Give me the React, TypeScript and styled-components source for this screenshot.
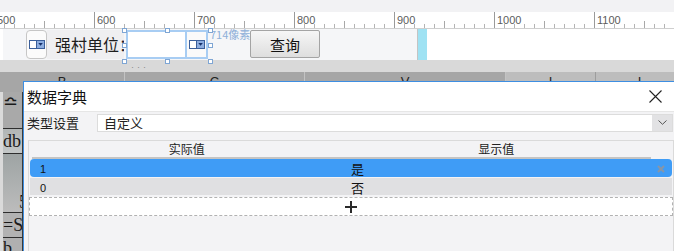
import React from 'react';
import styled, { createGlobalStyle } from 'styled-components';

const GlobalStyle = createGlobalStyle`
  html, body {
    margin: 0;
    padding: 0;
    background: #fff;
    overflow: hidden;
  }
  body {
    font-family: "Noto Sans CJK SC", "Noto Sans", sans-serif;
  }
`;

// 눈금자 라벨
const rulerMarks = [500, 600, 700, 800, 900, 1000, 1100, 1200];

const sheetColumns = [
  { label: 'B', light: false },
  { label: 'C', light: false },
  { label: 'V', light: false },
  { label: 'I', light: true },
  { label: 'I', light: true },
  { label: '', light: true },
];

const sheetRows = [
  { h: 36, text: '≏', tone: '#a9a9a9', align: 'flex-start', pad: 0 },
  { h: 24, text: 'db', tone: 'linear-gradient(#b1b5b5, #c3c7c7)', align: 'center', pad: 0 },
  { h: 58, text: '5', tone: 'linear-gradient(#9ea4a4, #bcbcbc)', align: 'flex-end', pad: 16 },
  { h: 24, text: '=S', tone: '#b2b2b2', align: 'center', pad: 0 },
  { h: 24, text: 'b', tone: '#b0b0b0', align: 'flex-start', pad: 0 },
];

const dictRows = [
  { value: '1', label: '是', selected: true },
  { value: '0', label: '否', selected: false },
];

const SelectIcon = () => (
  <svg width="16" height="9" viewBox="0 0 16 9">
    <rect x="0.5" y="0.5" width="7" height="8" fill="#fff" stroke="#3b5f9a" />
    <rect x="7.5" y="0.5" width="8" height="8" fill="#8eaee0" stroke="#3b5f9a" />
    <path d="M9.3 3 L13.8 3 L11.55 5.8 Z" fill="#15306a" />
  </svg>
);

const App: React.FC = () => {
  return (
    <Page>
      <GlobalStyle />
      <TopStrip />

      <Ruler>
        {rulerMarks.map(m => (
          <RulerSeg key={m}>{m}</RulerSeg>
        ))}
      </Ruler>

      <Toolbar>
        <Panel>
          <ToggleBox>
            <SelectIcon />
          </ToggleBox>
          <LabelBox>强村单位：</LabelBox>
          <FieldWrap>
            <FieldInput />
            <DropBtn>
              <SelectIcon />
            </DropBtn>
            {[
              [-2, -2], [41, -2], [84, -2],
              [-2, 13], [84, 13],
              [-2, 29], [41, 29], [84, 29],
            ].map(([l, t], i) => (
              <Handle key={i} style={{ left: l, top: t }} />
            ))}
          </FieldWrap>
          <SizeHint>714像素</SizeHint>
          <QueryButton type="button">查询</QueryButton>
        </Panel>
        <CyanBar />
      </Toolbar>

      <Splitter>
        <Dots>•••</Dots>
      </Splitter>

      <Sheet>
        <SheetHead>
          {sheetColumns.map((c, i) => (
            <HeadCell key={i} $light={c.light}>{c.label}</HeadCell>
          ))}
        </SheetHead>
        <SheetBody>
          {sheetRows.map((r, i) => (
            <SheetCell key={i} $h={r.h} $tone={r.tone} $align={r.align}>
              <CellText $pad={r.pad}>{r.text}</CellText>
            </SheetCell>
          ))}
        </SheetBody>
      </Sheet>

      {/* 数据字典 弹窗 */}
      <Dialog>
        <DialogHeader>
          <DialogTitle>数据字典</DialogTitle>
          <CloseButton type="button" aria-label="close">
            <svg width="13" height="13" viewBox="0 0 13 13">
              <path d="M0.5 0.5 L12.5 12.5 M12.5 0.5 L0.5 12.5" stroke="#222" strokeWidth="1.1" />
            </svg>
          </CloseButton>
        </DialogHeader>

        <TypeRow>
          <TypeLabel>类型设置</TypeLabel>
          <TypeSelect>
            <TypeValue>自定义</TypeValue>
            <Chevron>
              <svg width="9" height="5" viewBox="0 0 9 5">
                <path d="M0.5 0.5 L4.5 4.3 L8.5 0.5" fill="none" stroke="#555" strokeWidth="1" />
              </svg>
            </Chevron>
          </TypeSelect>
        </TypeRow>

        <DictTable>
          <DictHead>
            <HeadLabel>实际值</HeadLabel>
            <HeadLabel>显示值</HeadLabel>
          </DictHead>
          {dictRows.map(r => (
            <DictRow key={r.value} $selected={r.selected}>
              <ValueCell>{r.value}</ValueCell>
              <LabelCell>{r.label}</LabelCell>
              <ActionCell>
                {r.selected && (
                  <svg width="8" height="8" viewBox="0 0 8 8">
                    <path d="M1 1 L7 7 M7 1 L1 7" stroke="#8796a8" strokeWidth="2" />
                  </svg>
                )}
              </ActionCell>
            </DictRow>
          ))}
          <AddRow>
            <span />
            <PlusCell>
              <svg width="12" height="12" viewBox="0 0 12 12">
                <path d="M6 0 V12 M0 6 H12" stroke="#2a2a2a" strokeWidth="2" />
              </svg>
            </PlusCell>
          </AddRow>
        </DictTable>
      </Dialog>
    </Page>
  );
};

export default App;

// --------------------------------------
// styled-components
// --------------------------------------

const Page = styled.div`
  position: relative;
  width: 674px;
  height: 251px;
  overflow: hidden;
  background: #fff;
`;

const TopStrip = styled.div`
  height: 12px;
  background: #f2f2f4;
`;

const Ruler = styled.div`
  display: flex;
  height: 16px;
  margin-left: -6px;
  background: #fff;
  border-bottom: 1px solid #cfcfcf;
`;

const RulerSeg = styled.div`
  flex: 0 0 100px;
  box-sizing: border-box;
  border-left: 1px solid #9a9a9a;
  padding: 3px 0 0 2px;
  background-image:
    linear-gradient(#a8a8a8, #a8a8a8),
    repeating-linear-gradient(to right, transparent 0 9px, #b4b4b4 9px 10px);
  background-size: 1px 7px, 100% 4px;
  background-position: 49px 100%, 0 100%;
  background-repeat: no-repeat;
  font: 11px/11px "Liberation Sans", Arial, sans-serif;
  color: #5c5c5c;
`;

const Toolbar = styled.div`
  display: flex;
  height: 31px;
  background: #fff;
`;

const Panel = styled.div`
  position: relative;
  z-index: 1;
  box-sizing: border-box;
  display: flex;
  align-items: flex-start;
  width: 415px;
  margin-left: 3px;
  padding: 1px 0 0 23px;
  background: #f5f6f8;
  border-right: 1px solid #c4c4c4;
`;

const CyanBar = styled.div`
  width: 9px;
  background: #9fe2f3;
`;

const ToggleBox = styled.div`
  box-sizing: border-box;
  width: 21px;
  height: 29px;
  display: flex;
  align-items: center;
  justify-content: center;
  border: 1px solid #c6c6c6;
  border-radius: 4px;
  background: #fbfbfb;
`;

const LabelBox = styled.div`
  width: 77px;
  height: 29px;
  box-sizing: border-box;
  padding-left: 8px;
  background: #efeff1;
  font-size: 16px;
  line-height: 29px;
  color: #1e1e1e;
  white-space: nowrap;
  overflow: hidden;
`;

const FieldWrap = styled.div`
  position: relative;
  display: flex;
  width: 86px;
  height: 31px;
  box-sizing: border-box;
  padding: 0 2px;
`;

const FieldInput = styled.div`
  box-sizing: border-box;
  width: 61px;
  height: 29px;
  background: #fff;
  border: 2px solid #a8cdf3;
`;

const DropBtn = styled.div`
  box-sizing: border-box;
  width: 21px;
  height: 29px;
  display: flex;
  align-items: center;
  justify-content: center;
  background: #fafafa;
  border: 2px solid #a8cdf3;
  border-left: 0;
`;

const Handle = styled.span`
  position: absolute;
  box-sizing: border-box;
  width: 5px;
  height: 5px;
  background: #fff;
  border: 1px solid #7fa6d4;
`;

const SizeHint = styled.div`
  width: 40px;
  margin-top: -2px;
  font-size: 11px;
  line-height: 13px;
  color: #8eb0d8;
  white-space: nowrap;
`;

const QueryButton = styled.button`
  box-sizing: border-box;
  width: 70px;
  height: 28px;
  padding: 0;
  border: 1px solid #a4a4a4;
  border-radius: 2px;
  background: linear-gradient(#f6f6f6, #dedede);
  font-family: "Noto Sans CJK SC", sans-serif;
  font-size: 15px;
  color: #111;
`;

const Splitter = styled.div`
  height: 12px;
  background: #d9d9d9;
  display: flex;
  align-items: center;
`;

const Dots = styled.span`
  margin-left: 130px;
  font-size: 5px;
  letter-spacing: 1px;
  color: #888;
`;

const Sheet = styled.div`
  height: 179px;
  background: #b8b8b8;
`;

const SheetHead = styled.div`
  display: grid;
  grid-template-columns: 125px 180px 201px 90px 88px 1fr;
  height: 20px;
`;

const HeadCell = styled.div<{ $light: boolean }>`
  background: ${({ $light }) => ($light ? '#bdbdbd' : '#a6a6a6')};
  border-right: 1px solid ${({ $light }) => ($light ? '#9d9d9d' : '#c3c3c3')};
  font: 13px/20px "Liberation Sans", Arial, sans-serif;
  color: #222;
  text-align: center;
`;

const SheetBody = styled.div`
  display: flex;
  flex-direction: column;
  padding-left: 3px;
  background: #dadada;
`;

const SheetCell = styled.div<{ $h: number; $tone: string; $align: string }>`
  width: 19px;
  height: ${({ $h }) => $h}px;
  display: flex;
  align-items: ${({ $align }) => $align};
  background: ${({ $tone }) => $tone};
  border-bottom: 1px solid #2e2e2e;
  border-right: 1px solid #3a3a3a;
  overflow: hidden;
  font: 18px/20px "Liberation Serif", "Times New Roman", serif;
  color: #1a1a1a;
  white-space: nowrap;
`;

const CellText = styled.span<{ $pad: number }>`
  margin-left: ${({ $pad }) => $pad}px;
`;

const Dialog = styled.div`
  position: absolute;
  left: 23px;
  top: 81px;
  width: 651px;
  height: 180px;
  box-sizing: border-box;
  border-top: 1px solid #3d8ee2;
  border-left: 1px solid #3d8ee2;
  background: #f3f3f5;
  z-index: 2;
`;

const DialogHeader = styled.div`
  height: 29px;
  display: flex;
  align-items: center;
  justify-content: space-between;
  padding: 0 12px 0 3px;
  background: #fff;
  border-bottom: 1px solid #e6e6e6;
`;

const DialogTitle = styled.div`
  font-size: 15px;
  color: #111;
`;

const CloseButton = styled.button`
  display: flex;
  padding: 0;
  border: 0;
  background: transparent;
`;

const TypeRow = styled.div`
  height: 21px;
  display: flex;
  align-items: center;
  padding: 0 1px 0 3px;
`;

const TypeLabel = styled.div`
  width: 70px;
  font-size: 13px;
  color: #222;
`;

const TypeSelect = styled.div`
  flex: 1;
  height: 18px;
  box-sizing: border-box;
  display: flex;
  align-items: center;
  background: #fff;
  border: 1px solid #dcdcdc;
`;

const TypeValue = styled.div`
  flex: 1;
  padding-left: 6px;
  font-size: 13px;
  color: #222;
`;

const Chevron = styled.div`
  width: 20px;
  height: 100%;
  display: flex;
  align-items: center;
  justify-content: center;
  background: #e2e2e4;
`;

const DictTable = styled.div`
  margin: 7px 0 0 4px;
  height: 120px;
  border: 1px solid #dadada;
  border-bottom: 0;
`;

const DictHead = styled.div`
  display: grid;
  grid-template-columns: 1fr 1fr;
  height: 16px;
  margin: 0 22px 0 3px;
  border-bottom: 2px solid #c4c4c4;
`;

const HeadLabel = styled.div`
  text-align: center;
  font-size: 12px;
  line-height: 16px;
  color: #222;
`;

const DictRow = styled.div<{ $selected: boolean }>`
  display: grid;
  grid-template-columns: 311px 312px 1fr;
  align-items: center;
  height: ${({ $selected }) => ($selected ? 18 : 17)}px;
  margin: 0 1px ${({ $selected }) => ($selected ? 1 : 2)}px;
  border-radius: ${({ $selected }) => ($selected ? '4px' : '0')};
  background: ${({ $selected }) => ($selected ? '#3f9cf6' : '#e0e0e2')};
`;

const ValueCell = styled.div`
  padding-left: 10px;
  font: 11px "Liberation Sans", Arial, sans-serif;
  color: #111;
`;

const LabelCell = styled.div`
  padding-left: 10px;
  font-size: 13px;
  color: #111;
`;

const ActionCell = styled.div`
  display: flex;
  align-items: center;
  padding-left: 4px;
`;

const AddRow = styled.div`
  display: grid;
  grid-template-columns: 311px 1fr;
  align-items: center;
  height: 19px;
  box-sizing: border-box;
  background: #fff;
  border: 1px dashed #b2b2b2;
`;

const PlusCell = styled.div`
  display: flex;
  padding-left: 4px;
`;
